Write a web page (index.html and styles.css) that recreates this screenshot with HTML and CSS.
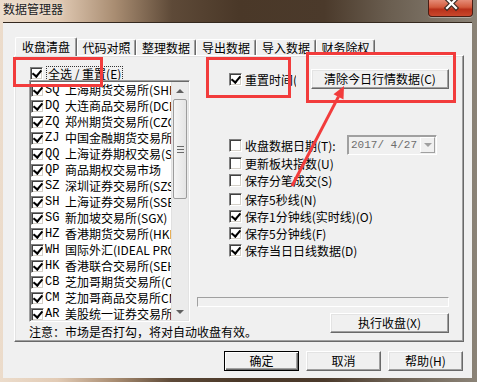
FILE: index.html
```html
<!DOCTYPE html>
<html lang="zh-CN">
<head>
  <meta charset="UTF-8">
  <title>数据管理器</title>
  <link rel="stylesheet" href="styles.css">
</head>
<body>
  <div class="window">
    <div class="titlebar">
      <span class="title">数据管理器</span>
      <span class="close">
        <svg width="45" height="16" viewBox="0 0 45 16">
          <path d="M18 -1 L27 8 M27 -1 L18 8" stroke="#3a2a24" stroke-width="4.5" stroke-linecap="square"/>
          <path d="M18 -1 L27 8 M27 -1 L18 8" stroke="#fff" stroke-width="2.2" stroke-linecap="square"/>
        </svg>
      </span>
    </div>

    <div class="client">
      <!-- 选项卡 -->
      <div class="tabs">
        <span class="tab active">收盘清盘</span>
        <span class="tab w59">代码对照</span>
        <span class="tab">整理数据</span>
        <span class="tab">导出数据</span>
        <span class="tab">导入数据</span>
        <span class="tab w59">财务除权</span>
      </div>

      <div class="panel">
        <div class="col-left">
          <div class="select-all">
            <span class="cb on"></span>
            <span class="focus">全选 / 重置(E)</span>
          </div>

          <div class="listbox">
            <ul class="list">
              <li><span class="cb on"></span><span class="code">SQ</span><span class="name">上海期货交易所(SHFE)</span></li>
              <li><span class="cb on"></span><span class="code">DQ</span><span class="name">大连商品交易所(DCE)</span></li>
              <li><span class="cb on"></span><span class="code">ZQ</span><span class="name">郑州期货交易所(CZCE)</span></li>
              <li><span class="cb on"></span><span class="code">ZJ</span><span class="name">中国金融期货交易所</span></li>
              <li><span class="cb on"></span><span class="code">QQ</span><span class="name">上海证券期权交易(SSE)</span></li>
              <li><span class="cb on"></span><span class="code">QP</span><span class="name">商品期权交易市场</span></li>
              <li><span class="cb on"></span><span class="code">SZ</span><span class="name">深圳证券交易所(SZSE)</span></li>
              <li><span class="cb on"></span><span class="code">SH</span><span class="name">上海证券交易所(SSE)</span></li>
              <li><span class="cb on"></span><span class="code">SG</span><span class="name">新加坡交易所(SGX)</span></li>
              <li><span class="cb on"></span><span class="code">HZ</span><span class="name">香港期货交易所(HKFE)</span></li>
              <li><span class="cb on"></span><span class="code">WH</span><span class="name">国际外汇(IDEAL PRO)</span></li>
              <li><span class="cb on"></span><span class="code">HK</span><span class="name">香港联合交易所(SEHK)</span></li>
              <li><span class="cb on"></span><span class="code">CB</span><span class="name">芝加哥期货交易所(CBOT)</span></li>
              <li><span class="cb on"></span><span class="code">CM</span><span class="name">芝加哥商品交易所CME</span></li>
              <li><span class="cb on"></span><span class="code">AR</span><span class="name">美股统一证券交易所</span></li>
            </ul>
            <div class="scrollbar">
              <span class="sb-btn"><span class="tri up"></span></span>
              <div class="sb-track">
                <div class="sb-thumb"><span class="grip"></span></div>
              </div>
              <span class="sb-btn"><span class="tri down"></span></span>
            </div>
          </div>

          <p class="note">注意：市场是否打勾，将对自动收盘有效。</p>
        </div>

        <div class="col-right">
          <div class="top-row">
            <span class="cb on"></span>
            <span class="clip-label">重置时间(T)</span>
            <button class="btn clear">清除今日行情数据(C)</button>
          </div>

          <div class="date-row">
            <span class="cb"></span>
            <span class="label">收盘数据日期(T):</span>
            <span class="combo">
              <span class="combo-text">2017/ 4/27</span>
              <span class="combo-btn"><span class="tri down"></span></span>
            </span>
          </div>

          <div class="opt"><span class="cb"></span><span class="label">更新板块指数(U)</span></div>
          <div class="opt"><span class="cb"></span><span class="label">保存分笔成交(S)</span></div>
          <div class="opt gap"><span class="cb"></span><span class="label">保存5秒线(N)</span></div>
          <div class="opt"><span class="cb on"></span><span class="label">保存1分钟线(实时线)(O)</span></div>
          <div class="opt"><span class="cb on"></span><span class="label">保存5分钟线(F)</span></div>
          <div class="opt"><span class="cb on"></span><span class="label">保存当日日线数据(D)</span></div>

          <div class="progress"></div>
          <button class="btn run">执行收盘(X)</button>
        </div>
      </div>

      <div class="dialog-buttons">
        <button class="btn default">确定</button>
        <button class="btn">取消</button>
        <button class="btn">帮助(H)</button>
      </div>
    </div>

    <!-- 标注 -->
    <div class="mark mark-all"></div>
    <div class="mark mark-time"></div>
    <div class="mark mark-clear"></div>
    <svg class="arrow" width="477" height="382" viewBox="0 0 477 382">
      <line x1="292" y1="186" x2="338.5" y2="96.6" stroke="#f23c3c" stroke-width="3"/>
      <polygon points="344,86 343.5,99.5 333.5,94.3" fill="#f23c3c"/>
    </svg>
  </div>
</body>
</html>
```

FILE: styles.css
```css
/* 基本 */
* {
    box-sizing: border-box;
}

body {
    margin: 0;
    font-family: "Noto Sans CJK SC", sans-serif;
    font-size: 12px;
    color: #000;
    background: #fff;
}

/* 窗口外框 */
.window {
    position: relative;
    width: 477px;
    height: 382px;
    display: flex;
    flex-direction: column;
    overflow: hidden;
    background: linear-gradient(to right, #ecdccb 0%, #e2cbb5 12%, #a98d72 24%, #5e4a38 36%, #4a3828 50%, #4b3a2b 68%, #6b5f51 82%, #8b8377 100%);
}

.titlebar {
    height: 22px;
    display: flex;
    align-items: flex-start;
    padding-left: 3px;
}

.title {
    line-height: 18px;
    color: #1c1c24;
    text-shadow: 0 0 5px rgba(255,255,255,0.6);
}

.close {
    margin-left: auto;
    margin-right: 4px;
    width: 45px;
    height: 17px;
    border: 1px solid #4a1e14;
    border-top: none;
    border-radius: 0 0 4px 4px;
    background: linear-gradient(#e58c77 0%, #d35a3d 45%, #b8311a 58%, #c9472c 100%);
    box-shadow: 0 1px 0 rgba(255,255,255,0.35);
}

.close svg {
    display: block;
}

/* 客户区 */
.client {
    flex: 1;
    margin: 0 5px 4px 3px;
    padding: 14px 8px 0 11px;
    background: #f0f0f0;
    border-top: 1px solid #34281e;
}

/* 选项卡 */
.tabs {
    display: flex;
    align-items: flex-end;
    height: 18px;
    margin-left: 1px;
}

.tab {
    width: 60px;
    height: 16px;
    line-height: 15px;
    text-align: center;
    background: #f0f0f0;
    border: 1px solid #696969;
    border-color: #fff #696969 transparent #fff;
    border-bottom: none;
    border-radius: 2px 2px 0 0;
    box-shadow: inset -1px 0 #a0a0a0;
}

.tab.w59 {
    width: 59px;
}

.tab.active {
    position: relative;
    z-index: 2;
    width: 62px;
    height: 19px;
    line-height: 17px;
    margin-bottom: -1px;
}

/* 面板 */
.panel {
    display: flex;
    height: 287px;
    padding: 11px 14px 1px 14px;
    border: 1px solid;
    border-color: #fff #696969 #696969 #fff;
    box-shadow: inset -1px -1px #a0a0a0, inset 1px 1px #e3e3e3;
}

.col-left {
    width: 161px;
    display: flex;
    flex-direction: column;
}

.col-right {
    width: 252px;
    margin-left: 7px;
    display: flex;
    flex-direction: column;
    padding-bottom: 7px;
}

/* 复选框 */
.cb {
    position: relative;
    flex: none;
    width: 13px;
    height: 13px;
    background: #fff;
    border: 1px solid;
    border-color: #808080 #fff #fff #808080;
    box-shadow: inset 1px 1px #404040, inset -1px -1px #d4d0c8;
}

.cb.on::after {
    content: "";
    position: absolute;
    left: 3px;
    top: 0;
    width: 4px;
    height: 7px;
    border: solid #000;
    border-width: 0 2px 2px 0;
    transform: rotate(40deg);
}

.select-all {
    display: flex;
    align-items: center;
    height: 13px;
    padding-left: 1px;
    line-height: 13px;
}

.focus {
    margin-left: 3px;
    padding: 0 1px;
    border: 1px dotted #333;
}

/* 列表框 */
.listbox {
    display: flex;
    height: 242px;
    background: #fff;
    border: 1px solid;
    border-color: #a0a0a0 #fff #fff #a0a0a0;
    box-shadow: inset 1px 1px #696969, inset -1px -1px #e3e3e3;
    padding: 1px;
}

.list {
    flex: 1;
    margin: 0;
    padding: 0;
    list-style: none;
    overflow: hidden;
}

.list li {
    display: flex;
    align-items: center;
    height: 16px;
    line-height: 16px;
    white-space: nowrap;
}

.code {
    flex: none;
    width: 20px;
    margin-left: 1px;
    font-family: "Liberation Mono", monospace;
    font-size: 12px;
}

.name {
    margin-left: 0;
}

.scrollbar {
    flex: none;
    width: 17px;
    display: flex;
    flex-direction: column;
    background: #ebebeb;
    border-left: 1px solid #e0e0e0;
}

.sb-btn {
    height: 17px;
    display: flex;
    align-items: center;
    justify-content: center;
}

.sb-track {
    flex: 1;
}

.sb-thumb {
    height: 100px;
    margin: 0 1px;
    display: flex;
    align-items: center;
    justify-content: center;
    border: 1px solid #9c9c9c;
    border-radius: 2px;
    background: linear-gradient(to right, #f5f5f5, #e4e4e4);
}

.grip {
    width: 7px;
    height: 7px;
    background: repeating-linear-gradient(#6a6a6a 0 1px, transparent 1px 3px);
}

.tri {
    width: 0;
    height: 0;
    border-left: 4px solid transparent;
    border-right: 4px solid transparent;
}

.tri.up {
    border-bottom: 4px solid #606060;
}

.tri.down {
    border-top: 4px solid #606060;
}

.note {
    margin: 2px 0 0;
    line-height: 16px;
    white-space: nowrap;
}

/* 右侧 */
.top-row {
    display: flex;
    align-items: center;
    height: 20px;
    margin-top: 2px;
    padding-left: 32px;
}

.clip-label {
    width: 51px;
    margin-left: 3px;
    overflow: hidden;
    white-space: nowrap;
}

.btn {
    height: 20px;
    padding: 0;
    font-family: inherit;
    font-size: 12px;
    line-height: 16px;
    color: #000;
    background: #f0f0f0;
    border: 1px solid;
    border-color: #fff #696969 #696969 #fff;
    box-shadow: inset -1px -1px #a0a0a0, inset 1px 1px #e3e3e3;
}

.btn.clear {
    width: 138px;
    margin-left: auto;
}

.btn.run {
    width: 119px;
    margin-top: 6px;
    align-self: flex-end;
}

.btn.default {
    border-color: #000;
    box-shadow: inset 1px 1px #fff, inset -1px -1px #696969, inset -2px -2px #a0a0a0;
}

.date-row {
    display: flex;
    align-items: center;
    height: 20px;
    margin-top: 46px;
    padding-left: 32px;
}

.label {
    margin-left: 3px;
    white-space: nowrap;
}

.combo {
    display: flex;
    align-items: center;
    width: 90px;
    height: 20px;
    margin-left: auto;
    margin-right: 12px;
    padding: 1px;
    background: #f0f0f0;
    border: 1px solid;
    border-color: #a0a0a0 #fff #fff #a0a0a0;
    box-shadow: inset 1px 1px #a0a0a0;
}

.combo-text {
    flex: 1;
    padding-left: 2px;
    font-family: "Liberation Mono", monospace;
    font-size: 11px;
    color: #6d6d6d;
}

.combo-btn {
    width: 15px;
    height: 16px;
    display: flex;
    align-items: center;
    justify-content: center;
    border: 1px solid;
    border-color: #fff #a0a0a0 #a0a0a0 #fff;
}

.combo-btn .tri.down {
    border-top-color: #a0a0a0;
}

.opt {
    display: flex;
    align-items: center;
    height: 17px;
    padding-left: 32px;
}

.opt.gap {
    margin-top: 2px;
}

.progress {
    height: 10px;
    margin-top: auto;
    border: 1px solid;
    border-color: #a0a0a0 #fff #fff #a0a0a0;
}

/* 底部按钮 */
.dialog-buttons {
    display: flex;
    justify-content: flex-end;
    gap: 7px;
    margin-top: 9px;
    padding-right: 1px;
}

.dialog-buttons .btn {
    width: 75px;
}

/* 红色标注 */
.mark {
    position: absolute;
    border: 3px solid #f23c3c;
}

.mark-all {
    left: 13px;
    top: 57px;
    width: 90px;
    height: 30px;
}

.mark-time {
    left: 206px;
    top: 57px;
    width: 85px;
    height: 41px;
}

.mark-clear {
    left: 306px;
    top: 52px;
    width: 150px;
    height: 51px;
}

.arrow {
    position: absolute;
    left: 0;
    top: 0;
    pointer-events: none;
}
```
